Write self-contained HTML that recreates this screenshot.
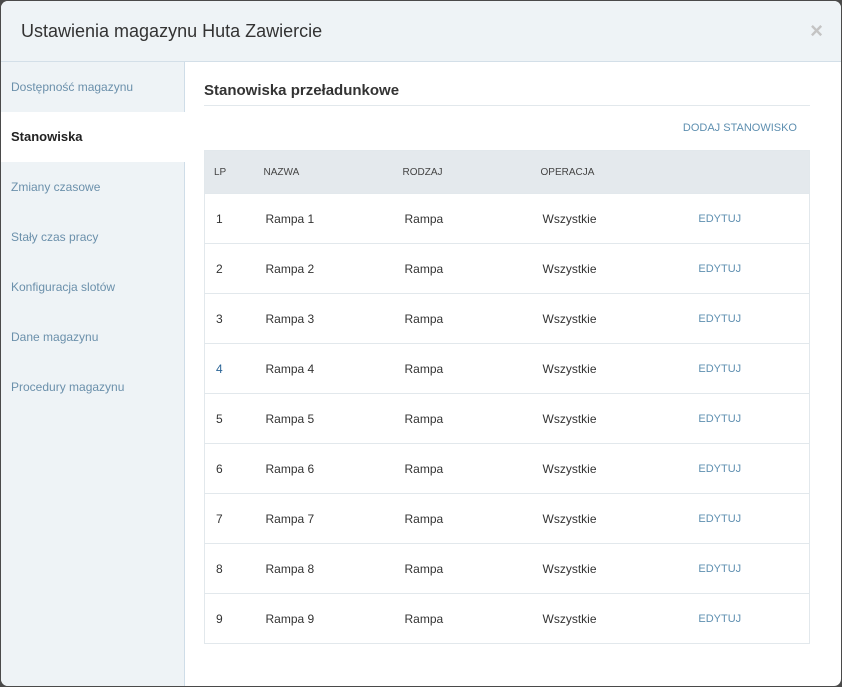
<!DOCTYPE html>
<html><head><meta charset="utf-8"><style>
*{box-sizing:border-box;margin:0;padding:0}
body{width:842px;height:687px;background:#4a4a4a;font-family:"Liberation Sans",sans-serif;overflow:hidden;position:relative}
.m{position:absolute;left:1px;top:1px;width:840px;height:685px;background:#fff;border-radius:7px;overflow:hidden}
.hd{position:absolute;left:0;top:0;width:840px;height:61px;background:#eef3f6;border-bottom:1px solid #d3dfe8}
.hd h1{position:absolute;left:20px;top:20px;font-size:18px;font-weight:normal;color:#333}
.x{position:absolute;right:18px;top:17px;font-size:22px;color:#c4c4c4;font-weight:bold}
.sb{position:absolute;left:0;top:61px;width:184px;height:624px;background:#eef3f6;border-right:1px solid #cfdde8}
.it{height:50px;line-height:50px;padding-left:10px;font-size:12px;color:#6b90ab}
.it.a{background:#fff;color:#222;font-weight:bold;font-size:13px;margin-right:-1px}
.ct{position:absolute;left:203px;top:61px;width:606px}
.t{position:absolute;top:20px;left:0;font-size:15px;font-weight:bold;color:#333}
.hr{position:absolute;top:43px;left:0;width:606px;height:1px;background:#e2e8ec}
.add{position:absolute;top:60px;right:13px;font-size:11px;color:#5e8fb0}
table{position:absolute;top:88px;left:0;width:606px;border-collapse:collapse;border:1px solid #e2e8ec}
th{background:#e4e9ed;height:43px;text-align:left;font-weight:normal;font-size:10px;color:#444}
td{height:50px;border-top:1px solid #e2e8ec;font-size:12px;color:#333}
.e{color:#5e8fb0;font-size:11px}
</style></head><body>
<div class="m">
<div class="hd"><h1>Ustawienia magazynu Huta Zawiercie</h1><div class="x">×</div></div>
<div class="sb">
<div class="it">Dostępność magazynu</div>
<div class="it a">Stanowiska</div>
<div class="it">Zmiany czasowe</div>
<div class="it">Stały czas pracy</div>
<div class="it">Konfiguracja slotów</div>
<div class="it">Dane magazynu</div>
<div class="it">Procedury magazynu</div>
</div>
<div class="ct">
<div class="t">Stanowiska przeładunkowe</div>
<div class="hr"></div>
<div class="add">DODAJ STANOWISKO</div>
<table>
<tr><th style="width:50px;padding-left:9px">LP</th><th style="width:139px;padding-left:9px">NAZWA</th><th style="width:138px;padding-left:9px">RODZAJ</th><th style="padding-left:9px">OPERACJA</th><th></th></tr>
<tr><td style="padding-left:11px">1</td><td style="padding-left:11px">Rampa 1</td><td style="padding-left:11px">Rampa</td><td style="padding-left:11px">Wszystkie</td><td class="e">EDYTUJ</td></tr>
<tr><td style="padding-left:11px">2</td><td style="padding-left:11px">Rampa 2</td><td style="padding-left:11px">Rampa</td><td style="padding-left:11px">Wszystkie</td><td class="e">EDYTUJ</td></tr>
<tr><td style="padding-left:11px">3</td><td style="padding-left:11px">Rampa 3</td><td style="padding-left:11px">Rampa</td><td style="padding-left:11px">Wszystkie</td><td class="e">EDYTUJ</td></tr>
<tr><td style="padding-left:11px;color:#2a6496">4</td><td style="padding-left:11px">Rampa 4</td><td style="padding-left:11px">Rampa</td><td style="padding-left:11px">Wszystkie</td><td class="e">EDYTUJ</td></tr>
<tr><td style="padding-left:11px">5</td><td style="padding-left:11px">Rampa 5</td><td style="padding-left:11px">Rampa</td><td style="padding-left:11px">Wszystkie</td><td class="e">EDYTUJ</td></tr>
<tr><td style="padding-left:11px">6</td><td style="padding-left:11px">Rampa 6</td><td style="padding-left:11px">Rampa</td><td style="padding-left:11px">Wszystkie</td><td class="e">EDYTUJ</td></tr>
<tr><td style="padding-left:11px">7</td><td style="padding-left:11px">Rampa 7</td><td style="padding-left:11px">Rampa</td><td style="padding-left:11px">Wszystkie</td><td class="e">EDYTUJ</td></tr>
<tr><td style="padding-left:11px">8</td><td style="padding-left:11px">Rampa 8</td><td style="padding-left:11px">Rampa</td><td style="padding-left:11px">Wszystkie</td><td class="e">EDYTUJ</td></tr>
<tr><td style="padding-left:11px">9</td><td style="padding-left:11px">Rampa 9</td><td style="padding-left:11px">Rampa</td><td style="padding-left:11px">Wszystkie</td><td class="e">EDYTUJ</td></tr>
</table>
</div>
</div>
</body></html>
